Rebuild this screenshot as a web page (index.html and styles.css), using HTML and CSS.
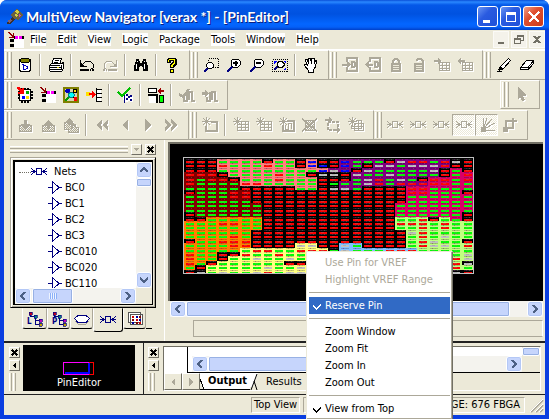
FILE: index.html
```html
<!DOCTYPE html>
<html lang="en">
<head>
<meta charset="utf-8">
<title>MultiView Navigator</title>
<link rel="stylesheet" href="styles.css">
</head>
<body>
<svg class="sprites" aria-hidden="true">
  <symbol id="db" viewBox="0 0 16 16"><path d="M2.500 4v9.500h1v1h9v-1h1V4" fill="#fff" stroke="#000"/><path d="M4 1h8v1h2v3h-2v1H4V5H2V2h2z" fill="#000"/><path d="M4 2h8v3H4z" fill="#808000"/><path d="M5 7.500h1.500M6.500 8.500h2l1.500 1v2l-1.500 1h-2z" fill="#fff" stroke="#0000c0"/></symbol>
  <symbol id="print" viewBox="0 0 16 16"><path d="M5.500 1.500h8l-2 6h-8z" fill="#fff" stroke="#000"/><path d="M7 3.500h4M6 5.500h4" stroke="#000"/><path d="M1.500 8.500l2-2h10l2-1v6l-2 3h-11l-1-1z" fill="#fff" stroke="#000"/><path d="M1 8.500h11M2 10.500h11M2 12.500h11M13 8v5" stroke="#000"/><path d="M9 10h2v1H9z" fill="#e0d000"/></symbol>
  <symbol id="undo" viewBox="0 0 16 16"><path d="M1.500 3v6.500H8M2 9l5-5h4l3 3v4l-2 1" fill="none" stroke="currentColor"/><path d="M1 5v5h5z" fill="currentColor"/><path d="M1 12h9v2H1zM11 12h1v2h-1zM13 12h2v2h-2z" fill="currentColor"/></symbol>
  <symbol id="redo" viewBox="0 0 16 16"><path d="M14.500 3v6.500H8M14 9L9 4H5L2 7v4l2 1" fill="none" stroke="currentColor"/><path d="M15 5v5h-5z" fill="currentColor"/><path d="M6 12h9v2H6zM4 12h1v2H4zM1 12h2v2H1z" fill="currentColor"/></symbol>
  <symbol id="find" viewBox="0 0 16 16"><path d="M3 2h3v2h1v2h2V4h1V2h3v3h1v3h1v6h-5v-4H9V9H7v1H6v4H1V8h1V5h1z" fill="#000"/><path d="M3.500 7v5M11.500 7v5M4.500 4v1M11.500 4v1" stroke="#fff"/></symbol>
  <symbol id="help" viewBox="0 0 16 16"><path d="M4 1h7l2 2v4l-3 3v1H6V7l3-2V4H7v2H3V2zM6 12h4v4H6z" fill="#000"/><path d="M5 2h5l1 1v3L9 8v2H7V8l3-3V3H5v2H4V3zM7 13h2v2H7z" fill="#ff0"/></symbol>
  <symbol id="lens" viewBox="0 0 16 16"><path d="M1 15l5-5" stroke="#000080" stroke-width="2.500"/><path d="M7 2h5l2 2v4l-2 2H7L5 8V4z" fill="#fff" stroke="#000"/></symbol>
  <symbol id="zwin" viewBox="0 0 16 16"><path d="M5.500 1.500h10v9h-10z" fill="none" stroke="#000" stroke-dasharray="1 1"/><path d="M1 15l4-4" stroke="#000080" stroke-width="2"/><path d="M5.500 5.500h3l2 2v2l-2 2h-3l-2-2v-2z" fill="#fff" stroke="#000"/></symbol>
  <symbol id="zin" viewBox="0 0 16 16"><use href="#lens"/><path d="M7 5h5v2H7zM8.500 3.500h2v5h-2z" fill="#000"/></symbol>
  <symbol id="zout" viewBox="0 0 16 16"><use href="#lens"/><path d="M7 5h5v2H7z" fill="#000"/></symbol>
  <symbol id="zfit" viewBox="0 0 16 16"><path d="M.5 2.500h15v12H.5z" fill="none" stroke="#000" stroke-dasharray="1 1"/><path d="M2 4h3L2 7zM14 4h-3l3 3zM14 13h-3l3-3z" fill="#00f"/><path d="M2 13l4-4" stroke="#000080" stroke-width="2"/><path d="M7 4.500h3l2 2v2l-2 2H7l-2-2v-2z" fill="#fff" stroke="#000"/></symbol>
  <symbol id="hand" viewBox="0 0 16 16"><path d="M5.500 15.500v-2l-4-5v-1h2l1 1-2-5v-1h1.500l2 4-.5-5h2l1 5 .5-5h2v5.500l1.500-3.500h1v2l-1.500 5-1.500 2v3z" fill="#fff" stroke="#000"/></symbol>
  <symbol id="pinin" viewBox="0 0 16 16"><path d="M5 5V1h10v13H5v-4" fill="none" stroke="currentColor" stroke-width="1.500"/><path d="M0 7h5V4l4 3.500L5 11V8.500H0z" fill="currentColor"/><path d="M10 5h2l1 1v3l-1 1h-2z" fill="none" stroke="currentColor" stroke-width="1.500"/></symbol>
  <symbol id="pinout" viewBox="0 0 16 16"><path d="M5 5V1h10v13H5v-4" fill="none" stroke="currentColor" stroke-width="1.500"/><path d="M8 7H4V4L0 7.500 4 11V8.500h4z" fill="currentColor"/><path d="M10 5h2l1 1v3l-1 1h-2z" fill="none" stroke="currentColor" stroke-width="1.500"/></symbol>
  <symbol id="lock" viewBox="0 0 16 16"><path d="M5 7V4l2-2h2l2 2v3" fill="none" stroke="currentColor" stroke-width="2"/><path d="M3 6h10v9H3z" fill="currentColor"/><path d="M5 8.500h6M5 10.500h6M5 12.500h6" stroke="#ece9d8"/></symbol>
  <symbol id="unlock" viewBox="0 0 16 16"><path d="M5 4l2-2h3l2 2v3" fill="none" stroke="currentColor" stroke-width="2"/><path d="M3 6h10v9H3z" fill="currentColor"/><path d="M5 8.500h6M5 10.500h6M5 12.500h6" stroke="#ece9d8"/></symbol>
  <symbol id="gridin" viewBox="0 0 16 16"><path d="M5 5.500h10.500v8H5zM5 8.500h11M5 11.500h11M8.500 6v7M12.500 5v8" fill="none" stroke="currentColor"/><path d="M0 3h4V1l4 3-4 3V5H0z" fill="currentColor"/></symbol>
  <symbol id="gridout" viewBox="0 0 16 16"><path d="M5 5.500h10.500v8H5zM5 8.500h11M5 11.500h11M8.500 6v7M12.500 5v8" fill="none" stroke="currentColor"/><path d="M8 3H4V1L0 4l4 3V5h4z" fill="currentColor"/></symbol>
  <symbol id="marker" viewBox="0 0 16 16"><path d="M12.500 1.500l2 2-7 8-3 1v-3z" fill="#fff" stroke="#000"/><path d="M4 9l4 3-3 1-2 1-1-1z" fill="#000"/><path d="M1 14h5v1H1z" fill="#000"/></symbol>
  <symbol id="eraser" viewBox="0 0 16 16"><path d="M7.500 3.500h7v3l-5 6h-8v-2z" fill="#fff" stroke="#000"/><path d="M2 10.500h7l5-6M9.500 10v3" fill="none" stroke="#000"/></symbol>
  <symbol id="chip" viewBox="0 0 16 16"><path d="M2.500 2.500h11v11h-11z" fill="#fff" stroke="#000"/><path d="M4 1.500h2M7 1.500h2M10 1.500h2M4 14.500h2M7 14.500h2M10 14.500h2M1.500 4v2M1.500 7v2M1.500 10v2M14.500 4v2M14.500 7v2M14.500 10v2" stroke="#000" stroke-width="2"/><path d="M9 4h3v3H9z" fill="#0a0"/><path d="M5 9h3v3H5z" fill="#00f"/><path d="M9 9h3v3H9z" fill="#ffe000"/><path d="M0 0h2l3 3V1h2v6H1V5h2L0 2z" fill="#f00"/></symbol>
  <symbol id="pine" viewBox="0 0 16 16"><path d="M6 7h10v9H6z" fill="#fff"/><path d="M6 4h10v3H6zM2 7h4v3H2zM2 12h4v3H2z" fill="#000"/><path d="M7 4h3v3H7zM11 4h3v3h-3z" fill="#f0f"/><path d="M10 4h1v3h-1z" fill="#fff"/><path d="M0 0h1l4 4V1h1v5H1V5h3L0 1z" fill="#900000"/></symbol>
  <symbol id="net" viewBox="0 0 16 16"><path d="M1 1h14v14H1z" fill="#d8d4b0" stroke="#808000" stroke-width="2"/><path d="M2 14l5-5" stroke="#00a000" stroke-width="1.500"/><path d="M4 4l8 8M12 4L8 8" stroke="#000"/><path d="M3 2h3l1 1v2L6 6H3L2 5V3z" fill="#0000c0"/><path d="M10.500 2.500h3v3h-3z" fill="#ffe000" stroke="#000"/><path d="M6.500 5.500h3l2 2v1l-2 2h-3l-1-2v-1z" fill="#0ff" stroke="#008080"/><path d="M11 10h3v4h-3z" fill="#f00"/></symbol>
  <symbol id="route" viewBox="0 0 16 16"><path d="M10 1h1v14h-1zM11 2h5v1h-5zM11 6h5v1h-5zM11 10h5v1h-5zM11 14h5v1h-5z" fill="#000"/><path d="M11 3h4v3h-4zM11 7h4v3h-4zM11 11h4v3h-4z" fill="#fff"/><path d="M0 5h4v4H0z" fill="#ffe000"/><path d="M3 6h3V4l4 3-4 4V8H3z" fill="#f00"/></symbol>
  <symbol id="commit" viewBox="0 0 16 16"><path d="M6 7h3v2h7v6h-3v-1h-2v1H8v-2H6z" fill="#fff"/><path d="M7 6h1v10H7zM9 7h2v2H9zM13 8h2v2h-2zM11 9h2v2h-2zM9 11h2v2H9zM13 12h2v2h-2z" fill="#000080"/><path d="M1 5l4 4 8-8" fill="none" stroke="#00c000" stroke-width="2.500"/></symbol>
  <symbol id="fplan" viewBox="0 0 16 16"><path d="M1 1.500h7v4H1zM1 8h7v8H1z" fill="#fff"/><path d="M.5 1.500h8v4h-8zM0 8h9v8M11.500 8.500h4v7h-4z" fill="none" stroke="#000" stroke-width="1.500"/><path d="M12 9h3v6h-3z" fill="#0f0"/><path d="M16 3h-3V1L9 4l4 3V5h3z" fill="#a00000"/></symbol>
  <symbol id="wave1" viewBox="0 0 16 16"><path d="M0 7l4 3 6-8" fill="none" stroke="currentColor" stroke-width="2.500"/><path d="M5 10v4h3V5h0M10 13V5h3v9h3" fill="none" stroke="currentColor" stroke-width="1.500"/></symbol>
  <symbol id="wave2" viewBox="0 0 16 16"><path d="M0 5h3V3l4 3.500L3 10V8H0z" fill="currentColor"/><path d="M5 10v4h3V5h0M10 13V5h3v9h3" fill="none" stroke="currentColor" stroke-width="1.500"/></symbol>
  <symbol id="cursor" viewBox="0 0 16 16"><path d="M4 1l8 7v2H9l2 4-3 1-2-4-2 2z" fill="currentColor"/></symbol>
  <pattern id="dots" width="2" height="2" patternUnits="userSpaceOnUse"><path d="M0 0h1v1H0zM1 1h1v1H1z" fill="#aca899"/></pattern>
  <symbol id="down" viewBox="0 0 16 16"><path d="M2.500 8.500h12v6h-12z" fill="url(#dots)" stroke="currentColor"/><path d="M7 3h3v4h3l-4.500 5L4 7h3z" fill="currentColor"/></symbol>
  <symbol id="up" viewBox="0 0 16 16"><path d="M2.500 8.500h12v6h-12z" fill="url(#dots)" stroke="currentColor"/><path d="M7 12h3V8h3L8.500 3 4 8h3z" fill="currentColor"/></symbol>
  <symbol id="upall" viewBox="0 0 16 16"><path d="M1.500 5.500h8v2h3v3h3v5h-10v-3h-4z" fill="url(#dots)" stroke="currentColor"/><path d="M5 8V5H2l4-4 4 4 3 4h-3v3H8V8z" fill="currentColor"/></symbol>
  <symbol id="first" viewBox="0 0 16 16"><path d="M8 2v4L6 8l2 2v4L2 8zM14 2v4l-2 2 2 2v4L8 8z" fill="currentColor"/></symbol>
  <symbol id="prev" viewBox="0 0 16 16"><path d="M11 2v12L5 8z" fill="currentColor"/></symbol>
  <symbol id="next" viewBox="0 0 16 16"><path d="M5 2v12l7-6z" fill="currentColor"/></symbol>
  <symbol id="last" viewBox="0 0 16 16"><path d="M2 2v4l2 2-2 2v4l6-6zM8 2v4l2 2-2 2v4l6-6z" fill="currentColor"/></symbol>
  <symbol id="spark" viewBox="0 0 16 16"><path d="M4.500 0v9M0 4.500h9M1 1l7 7M8 1L1 8" stroke="currentColor"/></symbol>
  <symbol id="newbox" viewBox="0 0 16 16"><use href="#spark"/><path d="M9 5h6v9H4V9" fill="none" stroke="currentColor" stroke-width="1.500"/></symbol>
  <symbol id="newgrid" viewBox="0 0 16 16"><use href="#spark"/><path d="M9 4.500h6.500v9h-11V9M4 7.500h11M4 10.500h11M8.500 5v8M12.500 5v8" fill="none" stroke="currentColor"/></symbol>
  <symbol id="newu" viewBox="0 0 16 16"><use href="#spark"/><path d="M8 4h7v10H4V8" fill="none" stroke="currentColor" stroke-width="1.500"/><path d="M6.500 8v4h3V6.500h3V12" fill="none" stroke="currentColor"/></symbol>
  <symbol id="delbox" viewBox="0 0 16 16"><path d="M3.500 3.500h9v10h-9z" fill="url(#dots)" stroke="currentColor"/><path d="M0 2l15 12M15 2L0 14" stroke="currentColor" stroke-width="1.500"/></symbol>
  <symbol id="movebox" viewBox="0 0 16 16"><path d="M3 5h10v8H3z" fill="none" stroke="currentColor" stroke-width="1.500" stroke-dasharray="3 1"/><path d="M0 2h4V0l4 3-4 3V4H0zM8 12h4v-2l4 3-4 3v-2H8z" fill="currentColor"/></symbol>
  <symbol id="merge" viewBox="0 0 16 16"><use href="#spark"/><path d="M8 3.500h5.500v8h-10V8M6.500 6.500h9v7h-9zM10.500 4v10M4 9.500h12" fill="none" stroke="currentColor"/></symbol>
  <symbol id="rats" viewBox="0 0 16 16"><path d="M5.500 4.500h5v6h-5zM0 7.500h5M11 7.500h5M0 4l4 3.500L0 11M16 4l-4 3.500L16 11" fill="none" stroke="currentColor"/></symbol>
  <symbol id="fan" viewBox="0 0 16 16"><path d="M2 10h5v5H2z" fill="currentColor"/><path d="M4.500 10V1M5 10L8 1M6 10l7-8M7 11l9-5M7 13.500h9" stroke="currentColor"/></symbol>
  <symbol id="corner" viewBox="0 0 16 16"><path d="M1 10h5v5H1z" fill="currentColor"/><path d="M4 11V4h7v7H6M11 4V1M10 4h5" fill="none" stroke="currentColor" stroke-width="1.500"/></symbol>
  <symbol id="gate" viewBox="0 0 16 16"><path d="M4.500 1.500v12l6.500-6zM0 7.500h4M11 7.500h3" fill="#fff" stroke="#000080"/></symbol>
  <symbol id="hier" viewBox="0 0 16 16"><path d="M3.500 2v3.500h5V13.500h4M8 9.500h4" fill="none" stroke="#000080"/><path d="M2 1h3v3H2z" fill="#c00020"/><path d="M7 4h3v3H7z" fill="#008080"/><path d="M12 8h3v3h-3z" fill="#c000c0"/><path d="M12 12h3v3h-3z" fill="#c0a000"/><path d="M2 1h3v3H2zM7 4h3v3H7zM12 8h3v3h-3zM12 12h3v3h-3z" fill="none" stroke="#000080" stroke-width=".7"/></symbol>
  <symbol id="oval" viewBox="0 0 16 16"><path d="M4 4.500h8l3.500 3-3.500 4H4l-3.500-4z" fill="#fff" stroke="#000080"/><path d="M1 10l3 3h8l3-3" fill="none" stroke="#aca899"/></symbol>
  <symbol id="pins" viewBox="0 0 16 16"><path d="M1.500 1.500h12v10h-12zM3.500 3.500h12v10h-12z" fill="#fff" stroke="#555"/><path d="M5 5h2v2H5zM9 8h2v2H9zM12 11h2v2h-2z" fill="#d00000"/><path d="M9 5h2v2H9zM12 8h2v2h-2zM5 11h2v2H5z" fill="#0000a0"/><path d="M12 5h2v2h-2zM5 8h2v2H5zM9 11h2v2H9z" fill="#800000"/></symbol>
  <symbol id="tick" viewBox="0 0 8 8"><path d="M0 3l3 3 5-5v2L3 8 0 5z" fill="currentColor"/></symbol>
  <symbol id="cl" viewBox="0 0 8 8"><path d="M6 0L2 4l4 4" fill="none" stroke="currentColor" stroke-width="2"/></symbol>
  <symbol id="cr" viewBox="0 0 8 8"><path d="M2 0l4 4-4 4" fill="none" stroke="currentColor" stroke-width="2"/></symbol>
  <symbol id="cu" viewBox="0 0 8 8"><path d="M0 6l4-4 4 4" fill="none" stroke="currentColor" stroke-width="2"/></symbol>
  <symbol id="cd" viewBox="0 0 8 8"><path d="M0 2l4 4 4-4" fill="none" stroke="currentColor" stroke-width="2"/></symbol>
  <symbol id="x" viewBox="0 0 8 8"><path d="M1 1l6 6M7 1L1 7" stroke="currentColor" stroke-width="1.800"/></symbol>
  <symbol id="tl" viewBox="0 0 8 8"><path d="M6 0v8L2 4z" fill="currentColor"/></symbol>
  <symbol id="tr" viewBox="0 0 8 8"><path d="M2 0v8l4-4z" fill="currentColor"/></symbol>
  <symbol id="td" viewBox="0 0 8 8"><path d="M1 2h6L4 6z" fill="currentColor"/></symbol>
</svg>

<div class="window">
  <header class="titlebar">
    <svg class="icon" viewBox="0 0 16 16"><path d="M0 14l6-7 3 2-6 6H0z" fill="#3a3030"/><path d="M5 4l5-4 6 6-4 5-5-1-3-3z" fill="#6a6040"/><path d="M8 2l2-1 2 2-2 2zM7 6l2-1 2 2-2 1z" fill="#d8d040"/><path d="M12 5l2 1-2 2z" fill="#d050a0"/><path d="M1 11l3-1 1 2-3 2z" fill="#806070"/></svg>
    <h1>MultiView Navigator [verax *] - [PinEditor]</h1>
    <button class="cap" aria-label="Minimize"><svg viewBox="0 0 16 16"><path d="M3 11h7v3H3z" fill="#fff"/></svg></button>
    <button class="cap" aria-label="Maximize"><svg viewBox="0 0 16 16"><path d="M3.500 4v8.500h9V4z" fill="none" stroke="#fff"/><path d="M3 3h10v3H3z" fill="#fff"/></svg></button>
    <button class="cap close" aria-label="Close"><svg viewBox="0 0 16 16"><path d="M3 3l10 10M13 3L3 13" stroke="#fff" stroke-width="2.200"/></svg></button>
  </header>

  <div class="frame">
    <nav class="menubar">
      <svg class="icon"><use href="#pine"/></svg>
      <a href="#">File</a><a href="#">Edit</a><a href="#">View</a><a href="#">Logic</a><a href="#">Package</a><a href="#">Tools</a><a href="#">Window</a><a href="#">Help</a>
      <div class="mdi">
        <button aria-label="Minimize document"><svg viewBox="0 0 14 14"><path d="M4 9h6v2H4z" fill="#716f64"/></svg></button>
        <button aria-label="Restore document"><svg viewBox="0 0 14 14"><path d="M5.500 5V2.500h6v5H9M5 3h7M2.500 5.500h6v5h-6zM2 6h7" fill="none" stroke="#716f64"/></svg></button>
        <button aria-label="Close document"><svg viewBox="0 0 14 14"><path d="M4 3l6 7M10 3l-6 7" stroke="#716f64" stroke-width="2"/></svg></button>
      </div>
    </nav>

    <div class="toolrow">
      <div class="band"><i class="grip"></i>
        <button class="tool" aria-label="Database"><svg><use href="#db"/></svg></button><i class="sep"></i>
        <button class="tool" aria-label="Print"><svg><use href="#print"/></svg></button><i class="sep"></i>
        <button class="tool" aria-label="Undo"><svg><use href="#undo"/></svg></button>
        <button class="tool off" aria-label="Redo"><svg><use href="#redo"/></svg></button><i class="sep"></i>
        <button class="tool" aria-label="Find"><svg><use href="#find"/></svg></button><i class="sep"></i>
        <button class="tool" aria-label="Help"><svg><use href="#help"/></svg></button>
      </div>
      <div class="band"><i class="grip"></i>
        <button class="tool" aria-label="Zoom window"><svg><use href="#zwin"/></svg></button>
        <button class="tool" aria-label="Zoom in"><svg><use href="#zin"/></svg></button>
        <button class="tool" aria-label="Zoom out"><svg><use href="#zout"/></svg></button>
        <button class="tool" aria-label="Zoom fit"><svg><use href="#zfit"/></svg></button><i class="sep"></i>
        <button class="tool" aria-label="Pan"><svg><use href="#hand"/></svg></button>
      </div>
      <div class="band"><i class="grip"></i>
        <button class="tool off" aria-label="Assign"><svg><use href="#pinin"/></svg></button>
        <button class="tool off" aria-label="Unassign"><svg><use href="#pinout"/></svg></button>
        <button class="tool off" aria-label="Lock"><svg><use href="#lock"/></svg></button>
        <button class="tool off" aria-label="Unlock"><svg><use href="#unlock"/></svg></button>
        <button class="tool off" aria-label="Assign region"><svg><use href="#gridin"/></svg></button>
        <button class="tool off" aria-label="Unassign region"><svg><use href="#gridout"/></svg></button>
      </div>
      <div class="band rest"><i class="grip"></i>
        <button class="tool" aria-label="Highlight"><svg><use href="#marker"/></svg></button>
        <button class="tool" aria-label="Erase"><svg><use href="#eraser"/></svg></button>
      </div>
    </div>

    <div class="toolrow">
      <div class="band"><i class="grip"></i>
        <button class="tool" aria-label="Chip planner"><svg><use href="#chip"/></svg></button>
        <button class="tool" aria-label="Pin editor"><svg><use href="#pine"/></svg></button>
        <button class="tool" aria-label="Netlist"><svg><use href="#net"/></svg></button>
        <button class="tool" aria-label="Attributes"><svg><use href="#route"/></svg></button><i class="sep"></i>
        <button class="tool" aria-label="Commit"><svg><use href="#commit"/></svg></button><i class="sep"></i>
        <button class="tool" aria-label="Bank settings"><svg><use href="#fplan"/></svg></button><i class="sep"></i>
        <button class="tool off" aria-label="Check path"><svg><use href="#wave1"/></svg></button>
        <button class="tool off" aria-label="Expand path"><svg><use href="#wave2"/></svg></button>
      </div>
      <div class="band pointer"><i class="grip"></i>
        <button class="tool off" aria-label="Select"><svg><use href="#cursor"/></svg></button>
      </div>
    </div>

    <div class="toolrow">
      <div class="band"><i class="grip"></i>
        <button class="tool off" aria-label="Down"><svg><use href="#down"/></svg></button>
        <button class="tool off" aria-label="Up"><svg><use href="#up"/></svg></button>
        <button class="tool off" aria-label="Top"><svg><use href="#upall"/></svg></button><i class="sep"></i>
        <button class="tool off" aria-label="First"><svg><use href="#first"/></svg></button>
        <button class="tool off" aria-label="Previous"><svg><use href="#prev"/></svg></button>
        <button class="tool off" aria-label="Next"><svg><use href="#next"/></svg></button>
        <button class="tool off" aria-label="Last"><svg><use href="#last"/></svg></button>
      </div>
      <div class="band"><i class="grip"></i>
        <button class="tool off" aria-label="New region"><svg><use href="#newbox"/></svg></button><i class="sep"></i>
        <button class="tool off" aria-label="Inclusive region"><svg><use href="#newgrid"/></svg></button>
        <button class="tool off" aria-label="Exclusive region"><svg><use href="#newgrid"/></svg></button>
        <button class="tool off" aria-label="Empty region"><svg><use href="#newu"/></svg></button>
        <button class="tool off" aria-label="Delete region"><svg><use href="#delbox"/></svg></button>
        <button class="tool off" aria-label="Move region"><svg><use href="#movebox"/></svg></button>
        <button class="tool off" aria-label="Merge regions"><svg><use href="#merge"/></svg></button>
      </div>
      <div class="band"><i class="grip"></i>
        <button class="tool off" aria-label="Input nets"><svg><use href="#rats"/></svg></button>
        <button class="tool off" aria-label="Output nets"><svg><use href="#rats"/></svg></button>
        <button class="tool off" aria-label="All nets"><svg><use href="#rats"/></svg></button>
        <button class="tool off on" aria-label="Ratsnest"><svg><use href="#rats"/></svg></button>
        <button class="tool off on" aria-label="Fan"><svg><use href="#fan"/></svg></button>
        <button class="tool off" aria-label="Route"><svg><use href="#corner"/></svg></button>
      </div>
    </div>

    <main class="work">
      <aside class="dock">
        <div class="dockhead"><i class="ridge"></i>
          <button class="mini dim" aria-label="Panel menu"><svg><use href="#td"/></svg></button>
          <button class="mini" aria-label="Close panel"><svg><use href="#x"/></svg></button>
        </div>
        <div class="treeframe">
          <div class="treebox">
            <ul class="tree">
              <li class="root"><svg><use href="#rats"/></svg>Nets</li>
              <li><svg><use href="#gate"/></svg>BC0</li>
              <li><svg><use href="#gate"/></svg>BC1</li>
              <li><svg><use href="#gate"/></svg>BC2</li>
              <li><svg><use href="#gate"/></svg>BC3</li>
              <li><svg><use href="#gate"/></svg>BC010</li>
              <li><svg><use href="#gate"/></svg>BC020</li>
              <li><svg><use href="#gate"/></svg>BC110</li>
            </ul>
            <div class="sb vert">
              <button class="sbb" aria-label="Scroll up"><svg><use href="#cu"/></svg></button>
              <i class="thumb short"></i><i class="track"></i>
              <button class="sbb" aria-label="Scroll down"><svg><use href="#cd"/></svg></button>
            </div>
            <div class="sb">
              <button class="sbb" aria-label="Scroll left"><svg><use href="#cl"/></svg></button>
              <i class="thumb tree-thumb"></i><i class="track"></i>
              <button class="sbb" aria-label="Scroll right"><svg><use href="#cr"/></svg></button>
            </div>
          </div>
        </div>
        <div class="tabs">
          <button aria-label="Logical"><svg><use href="#hier"/></svg><span>L</span></button>
          <button aria-label="Physical"><svg><use href="#hier"/></svg><span>P</span></button>
          <button aria-label="Ports"><svg><use href="#oval"/></svg></button>
          <button class="active" aria-label="Nets"><svg><use href="#rats"/></svg></button>
          <button aria-label="Regions"><svg><use href="#pins"/></svg></button>
          <i class="cut"></i>
        </div>
      </aside>

      <section class="view">
        <div class="canvas"><svg id="pinmap" width="291" height="117" viewBox="0 0 291 117"></svg></div>
        <div class="sb">
          <button class="sbb" aria-label="Scroll left"><svg><use href="#cl"/></svg></button>
          <i class="thumb fill"></i><i class="track view-track"></i>
          <button class="sbb" aria-label="Scroll right"><svg><use href="#cr"/></svg></button>
        </div>
        <div class="readout"></div>
      </section>
    </main>

    <div class="lower">
      <section class="world">
        <div class="side">
          <button class="mini" aria-label="Close overview"><svg><use href="#x"/></svg></button>
          <button class="mini" aria-label="Collapse overview"><svg><use href="#tl"/></svg></button>
          <i class="grip"></i>
        </div>
        <div class="thumbview">
          <svg width="32" height="14" viewBox="0 0 32 14"><path d="M26 .5h4.500v12H26" fill="none" stroke="#f00"/><path d="M2 11h24V1" fill="none" stroke="#00f" stroke-width="2"/><path d="M26 .5H.5v12H26" fill="none" stroke="#f0f"/></svg>
          <span>PinEditor</span>
        </div>
      </section>
      <section class="log">
        <div class="side">
          <button class="mini" aria-label="Close log"><svg><use href="#x"/></svg></button>
          <button class="mini" aria-label="Collapse log"><svg><use href="#tl"/></svg></button>
          <i class="grip"></i>
        </div>
        <div class="logbox">
          <div class="logtop">
            <i class="gutter"></i>
            <div class="logmain">
              <div class="sb">
                <button class="sbb" aria-label="Scroll left"><svg><use href="#cl"/></svg></button>
                <i class="thumb log-thumb"></i><i class="track"></i>
                <button class="sbb" aria-label="Scroll right"><svg><use href="#cr"/></svg></button>
              </div>
            </div>
            <div class="logedge"><i class="thumb"></i></div>
          </div>
          <div class="logtabs">
            <button class="nav" aria-label="Previous tab"><svg><use href="#tl"/></svg></button>
            <button class="nav" aria-label="Next tab"><svg><use href="#tr"/></svg></button>
            <button class="tab active">Output</button>
            <svg class="slash" viewBox="0 0 8 17"><path d="M0 0h8L3 14H0z" fill="#fff"/><path d="M1 17L7 1M4 8l3 9" stroke="#000" fill="none"/></svg>
            <button class="tab">Results</button>
          </div>
        </div>
      </section>
    </div>

    <footer class="status">
      <span class="cell">Top View</span>
      <span class="cell wide"><span>F</span><span>PACKAGE: 676 FBGA</span></span>
      <svg class="sizer" viewBox="0 0 16 16"><path d="M3 15L15 3M8 15l7-7M12 15l3-3" stroke="#aca899" stroke-width="2"/><path d="M2 15L15 2M7 15l8-8M11 15l4-4" stroke="#fff"/></svg>
    </footer>
  </div>
</div>

<div class="popup" role="menu">
  <button role="menuitem" disabled>Use Pin for VREF</button>
  <button role="menuitem" disabled>Highlight VREF Range</button>
  <hr>
  <button role="menuitem" class="hot"><svg><use href="#tick"/></svg>Reserve Pin</button>
  <hr>
  <button role="menuitem">Zoom Window</button>
  <button role="menuitem">Zoom Fit</button>
  <button role="menuitem">Zoom In</button>
  <button role="menuitem">Zoom Out</button>
  <hr>
  <button role="menuitem"><svg><use href="#tick"/></svg>View from Top</button>
</div>
<script src="pinmap.js"></script>
</body>
</html>
```
FILE: styles.css
```css
* { box-sizing: border-box; }
body {
  margin: 0;
  height: 100vh;
  overflow: hidden;
  position: relative;
  background: #fff;
  color: #000;
  font: 11px/16px "DejaVu Sans Condensed", "Noto Sans", sans-serif;
}
.sprites { position: absolute; width: 0; height: 0; }
svg { display: block; flex: none; shape-rendering: crispEdges; }
button { font: inherit; color: inherit; border: 0; padding: 0; margin: 0; background: none; }
i { display: block; flex: none; }
.icon { width: 16px; height: 16px; }

.window {
  height: 100vh;
  display: flex;
  flex-direction: column;
  background: #0a3ee0;
  border-radius: 7px 7px 0 0;
  overflow: hidden;
}
.titlebar {
  height: 30px;
  flex: none;
  display: flex;
  align-items: center;
  gap: 2px;
  padding: 3px 5px 0 7px;
  background: linear-gradient(#0a4fd8 0, #2a88ff 2px, #0458e8 5px, #0052e0 14px, #0366ff 24px, #0460f8 27px, #0040c8 30px);
}
h1 {
  flex: 1;
  margin: 0 0 0 1px;
  color: #fff;
  font: bold 14px/20px Lato, "Noto Sans", sans-serif;
  white-space: nowrap;
  text-shadow: 1px 1px 0 #0a1f80;
}
.cap {
  width: 21px;
  height: 21px;
  display: grid;
  place-items: center;
  border: 1px solid #fff;
  border-radius: 3px;
  background: linear-gradient(135deg, #6a96f4, #2a5be0 40%, #1e50d8);
}
.cap svg { width: 16px; height: 16px; }
.cap.close { background: linear-gradient(135deg, #f0a088, #e05030 40%, #cc3a18); }

.frame {
  flex: 1;
  min-height: 0;
  display: flex;
  flex-direction: column;
  margin: 0 4px 4px;
  background: #ece9d8;
}
.menubar { height: 20px; flex: none; display: flex; align-items: center; padding-left: 4px; border-bottom: 1px solid #fff; }
.menubar a { margin-left: 11px; background: #fff; color: #000; line-height: 13px; text-decoration: none; }
.menubar .icon + a { margin-left: 6px; }
.mdi { margin-left: auto; display: flex; gap: 2px; }
.mdi button { width: 16px; height: 17px; background: #f4f2ea; border: 1px solid #fbfaf6; display: grid; place-items: center; }
.mdi svg { width: 14px; height: 14px; }

.toolrow { height: 30px; flex: none; display: flex; }
.band {
  display: flex;
  align-items: center;
  padding: 0 6px 1px 1px;
  border: solid;
  border-width: 1px 1px 1px 0;
  border-color: #fff #aca899 #aca899 #fff;
}
.band.rest { flex: 1; border-right: 0; }
.band.pointer { margin: 0 5px 1px auto; border-left-width: 1px; }
.grip {
  width: 7px;
  align-self: stretch;
  margin: 1px 1px 0 0;
  background: linear-gradient(90deg, #fff 1px, #ece9d8 1px 2px, #aca899 2px 3px, transparent 3px 4px, #fff 4px 5px, #ece9d8 5px 6px, #aca899 6px);
}
.sep { width: 2px; height: 22px; margin: 0 3px; background: linear-gradient(90deg, #aca899 1px, #fff 1px); }
.tool { width: 23px; height: 22px; display: grid; place-items: center; color: #000; }
.tool svg { width: 16px; height: 16px; }
.off { color: #aca899; }
.off svg { filter: drop-shadow(1px 1px 0 #fff); }
.on {
  border: 1px solid;
  border-color: #aca899 #fff #fff #aca899;
  background: repeating-conic-gradient(#fff 0 25%, #ece9d8 0 50%) 0 0 / 2px 2px;
}

.work { flex: 1; min-height: 0; display: flex; border-bottom: 2px solid #222; }
.dock { width: 161px; flex: none; display: flex; flex-direction: column; padding: 4px 8px 9px 6px; border-right: 1px solid #fff; }
.dockhead { display: flex; align-items: center; gap: 3px; height: 11px; flex: none; }
.ridge {
  flex: 1;
  height: 7px;
  background: linear-gradient(#fff 1px, #ece9d8 1px 2px, #aca899 2px 3px, #ece9d8 3px 4px, #fff 4px 5px, #ece9d8 5px 6px, #aca899 6px);
}
.mini {
  width: 11px;
  height: 11px;
  flex: none;
  display: grid;
  place-items: center;
  border: 1px solid;
  border-color: #fff #716f64 #716f64 #fff;
}
.mini svg { width: 7px; height: 7px; }
.mini.dim { color: #aca899; }
.treeframe {
  flex: 1;
  min-height: 0;
  display: flex;
  margin-top: 2px;
  padding: 2px;
  border: 1px solid;
  border-color: #aca899 #000 #000 #aca899;
  box-shadow: inset 1px 1px 0 #fff, inset -1px -1px 0 #aca899;
}
.treebox {
  flex: 1;
  min-width: 0;
  display: grid;
  grid-template: minmax(0, 1fr) 16px / minmax(0, 1fr) 16px;
  border: 2px solid #000;
  border-width: 2px 1px 1px 2px;
}
.tree { list-style: none; margin: 0; padding: 2px 0 0 33px; background: #fff; overflow: hidden; }
.tree li { display: flex; align-items: center; height: 16px; gap: 1px; }
.tree svg { width: 16px; height: 16px; color: #000080; }
.tree .root { margin-left: -29px; gap: 7px; }
.tree .root::before { content: ""; width: 12px; margin-right: -7px; border-top: 1px dotted #716f64; }
.sb { display: flex; height: 16px; background: #f4f3ee; min-width: 0; }
.sb.vert { flex-direction: column; width: 16px; height: auto; }
.sbb {
  width: 16px;
  height: 16px;
  flex: none;
  display: grid;
  place-items: center;
  border: 1px solid #fff;
  border-radius: 3px;
  background: #c6d5fc;
  box-shadow: inset 0 0 0 1px #b4c8f6;
  color: #4d6185;
}
.sbb svg { width: 8px; height: 8px; }
.track { flex: 1; }
.thumb {
  border: 1px solid #fff;
  border-radius: 2px;
  box-shadow: inset 0 0 0 1px #98b1e4;
  background: repeating-linear-gradient(90deg, #eef4fe 0 1px, #8cb0f8 1px 2px) center / 8px 6px no-repeat, #c6d5fc;
}
.thumb.short { height: 9px; background: #c6d5fc; }
.thumb.tree-thumb { width: 41px; margin-left: 1px; }
.thumb.fill { flex: 1; }
.view-track { flex: 0 0 17px; }
.tabs { height: 24px; flex: none; display: flex; align-items: flex-start; margin-left: 12px; }
.tabs button {
  position: relative;
  width: 25px;
  height: 21px;
  flex: none;
  display: grid;
  place-items: center;
  border: 1px solid;
  border-color: transparent #aca899 #000 #fff;
  border-radius: 0 0 3px 3px;
}
.tabs button + button { width: 23px; }
.tabs svg { width: 16px; height: 16px; color: #000080; }
.tabs span { position: absolute; left: 4px; bottom: 2px; color: #000080; font: bold 8px/8px "DejaVu Sans Condensed", sans-serif; }
.tabs button.active { width: 30px; height: 24px; border-color: #ece9d8 #000 #000 #fff; background: #ece9d8; }
.cut { width: 6px; height: 21px; border-bottom: 1px solid #000; }

.view { flex: 1; min-width: 0; display: flex; flex-direction: column; padding: 2px 2px 4px 3px; }
.canvas { flex: 1; min-height: 0; padding: 13px; overflow: hidden; background: #000; border: solid #716f64; border-width: 2px 0 0 2px; }
.view .sb { margin-left: 2px; flex: none; }
.readout { height: 17px; flex: none; margin: 3px 0 0 25px; border: 1px solid; border-color: #aca899 #fff #aca899 #aca899; }

.lower { height: 52px; flex: none; display: flex; border-bottom: 1px solid #222; }
.world { display: flex; flex: none; width: 140px; gap: 3px; padding: 2px 8px 3px 5px; border-right: 1px solid #222; }
.side { width: 11px; flex: none; display: flex; flex-direction: column; gap: 2px; align-items: center; padding-top: 2px; }
.side .grip { flex: 1; margin: 0; }
.thumbview { flex: 1; display: flex; flex-direction: column; align-items: center; padding-top: 17px; background: #000; color: #fff; line-height: 13px; }
.log { flex: 1; min-width: 0; display: flex; gap: 4px; padding: 2px 4px 3px 4px; }
.logbox { flex: 1; min-width: 0; display: flex; flex-direction: column; margin-top: 1px; border: 1px solid; border-color: #716f64 #fff #fff #716f64; }
.logtop { display: flex; height: 26px; flex: none; }
.gutter { width: 24px; background: #fff; border-right: 1px solid #000; }
.logmain { flex: 1; min-width: 0; display: flex; flex-direction: column; justify-content: flex-end; padding-left: 4px; background: #fff; border-bottom: 1px solid #000; }
.log-thumb { flex: 0 1 205px; }
.logedge { width: 18px; border-bottom: 1px solid #000; }
.logedge .thumb { height: 9px; background: #c6d5fc; }
.logtabs { flex: 1; min-height: 0; display: flex; }
.nav { width: 18px; display: grid; place-items: center; color: #aca899; border: 1px solid; border-color: #fff #716f64 #716f64 #fff; }
.nav svg { width: 8px; height: 8px; }
.tab { height: 17px; padding: 0 8px; }
.tab.active { padding: 0 3px 0 8px; background: linear-gradient(70deg, #ece9d8 3px, #000 3px 4px, #fff 4px); font-weight: bold; border-bottom: 1px solid #000; }
.slash { width: 8px; height: 17px; shape-rendering: auto; }

.status { height: 20px; flex: none; display: flex; align-items: center; gap: 3px; padding-left: 247px; }
.cell { height: 16px; padding: 0 2px; line-height: 14px; white-space: nowrap; border: 1px solid; border-color: #aca899 #fff #fff #aca899; }
.wide { flex: 1; min-width: 0; display: flex; justify-content: space-between; padding-right: 4px; }
.sizer { width: 16px; height: 16px; margin-right: 1px; shape-rendering: auto; }

/* Context menu floating over the pin view */
.popup {
  position: absolute;
  left: 306px;
  top: 251px;
  width: 147px;
  padding: 2px;
  background: #fff;
  border: 1px solid;
  border-color: #ece9d8 #716f64 #716f64 #ece9d8;
  box-shadow: inset -1px -1px 0 #aca899;
}
.popup button { position: relative; display: block; width: 100%; height: 17px; padding-left: 16px; line-height: 17px; text-align: left; white-space: nowrap; }
.popup button:disabled { color: #aca899; }
.popup .hot { background: #316ac5; color: #fff; }
.popup svg { position: absolute; left: 4px; top: 5px; width: 8px; height: 8px; }
.popup hr { height: 1px; margin: 4px 0; border: 0; background: #aca899; }
```
FILE: pinmap.js
```javascript
// 26 x 26 package pins: bank regions and pin states.
const banks = [
  "...pppp.pp.p..uuuu.uuuuu..",
  "...ppppppp.p..uu.uuuuuuu..",
  "...ppppppppppuu.uuuuuuu.g.",
  "mmm.ppppppp....uuuuuuuu.gg",
  "mmmm.ppppppp...uuuuuu.gggg",
  "mmmmmppppppp..uuuuuuuugggg",
  "mmmmm.....pp..uu....gggggg",
  ".mmmmm..............ggggg.",
  "mmmmmm..............gggggg",
  "mmmmmm..............gggggg",
  "mmmmmmm............ggggggg",
  "mmmmmmm............ggggggg",
  ".mmmmmm............gggggg.",
  "..ooooo............lll.lg.",
  "ooooooo............lllllll",
  "ooooooo............lllllll",
  "oooooo..............llllll",
  "oooooo..............llllll",
  ".ooooo..............lllll.",
  "oooooo....yy..bb....llllll",
  "oooooyyyyyyyy.bbbbbbblllll",
  "ooo..yyyyyyyyybbbbbbblllll",
  "ooo.yyyyyyyyyyybbbbbbbllll",
  "oo.yyyyyy..yyyybbbbbbblll.",
  "o.yyyyyyyyyyyyybbbbbbbllll",
  "..yyyyyyyyyyyyybbbbbbbll.."
];
const pins = [
  "RRRGGGGRGGRBRRBGGGRSRRGRSR",
  "RRRRGGGRGGRBBRBGRSSGSSSRRR",
  "RRRGGGGGGGGGBSBRSGGGGGSRGR",
  "RRRRGGGGRGGRSSRSGGSGGGGRGR",
  "RGRRRGGGRGGGRRRGSRGSGRRRGR",
  "RGGGGRRGGGGGRGGGSRGRRRRRGG",
  "GGGGGRRRRRGGRSSGRRRRRRGGGG",
  "RGGGRRRRRRRRRRRRRRRRRRGGGR",
  "GGGGRRRRRRRRRRRRRRRRGGGGGG",
  "GGGGGGRRRRRRRRRRRRRRGGGGGG",
  "GGGGGGGRRRRRRRRRRRRGGGGGGG",
  "GGGGGGGRRRRRRRRRRRRGGGGGGG",
  "RGGGGGGRRRRRRRRRRRRGGGGGGR",
  "RRGGGGGRRRRRRRRRRRRGGRRGGR",
  "GGGRRGGRRRRRRRRRRRRRRRGRGG",
  "GGGGGGGRRRRRRRRRRRRGGRGRGG",
  "GGGGGGRRRRRRRRRRRRRRSRGGGG",
  "GGGGRGRRRRRRRRRRRRRRGRGSGG",
  "RGGRRRRRRRRRRRRRRRRRGRSGGR",
  "GGGGRRRRRRSSRRSGRRRRGRSSGR",
  "GGGGGGRRGGRRRGSGGGRRRGGGGG",
  "RGGRRRGGRGGRSGGGRRGGRGGRGS",
  "RGGRGGSGGSGGRGSRGGGRGSGRRS",
  "RGRGGGGGGRRGGGGRRGGSGGGGRS",
  "GRGGGGGSGGSGGRGGSGGRGGGGRG",
  "RSGSGGSRGSSGRGSGGRGGSGGGSR"
];
const bankColor = { p: "#ff8080", m: "#800000", o: "#ff8000", y: "#ffff80", u: "#800080", g: "#d80068", l: "#c0ff80", b: "#80c0ff" };
const pinColor = { R: "#f00", G: "#0f0", S: "#c0c0c0", B: "#00f" };
const edge = (i, pitch, start) => start + Math.round(i * pitch);
const rect = (x, y, w, h, fill) => `<rect x="${x}" y="${y}" width="${w}" height="${h}" fill="${fill}"/>`;
let out = "";
for (let r = 0; r < 26; r++) {
  for (let c = 0; c < 26; c++) {
    const x = edge(c, 11.1, 1), y = edge(r, 4.43, 2);
    const w = edge(c + 1, 11.1, 1) - x, h = edge(r + 1, 4.43, 2) - y;
    const bank = bankColor[banks[r][c]];
    if (bank) out += rect(x, y, w, h, bank);
    out += rect(x + 2, y, 8, 1, bank ? "#0003" : "#202020");
    out += rect(x + 4, y, 1, 1, "#8087") + rect(x + 7, y, 1, 1, "#8886");
    out += rect(x + 2, y + 2, 8, 2, pinColor[pins[r][c]]) + rect(x + 4, y + 2, 3, 1, "#8885");
  }
}
out += '<path d="M.5 116.500V.5h290v116z" fill="none" stroke="#c0c0c0"/>';
document.getElementById("pinmap").innerHTML = out;
```
